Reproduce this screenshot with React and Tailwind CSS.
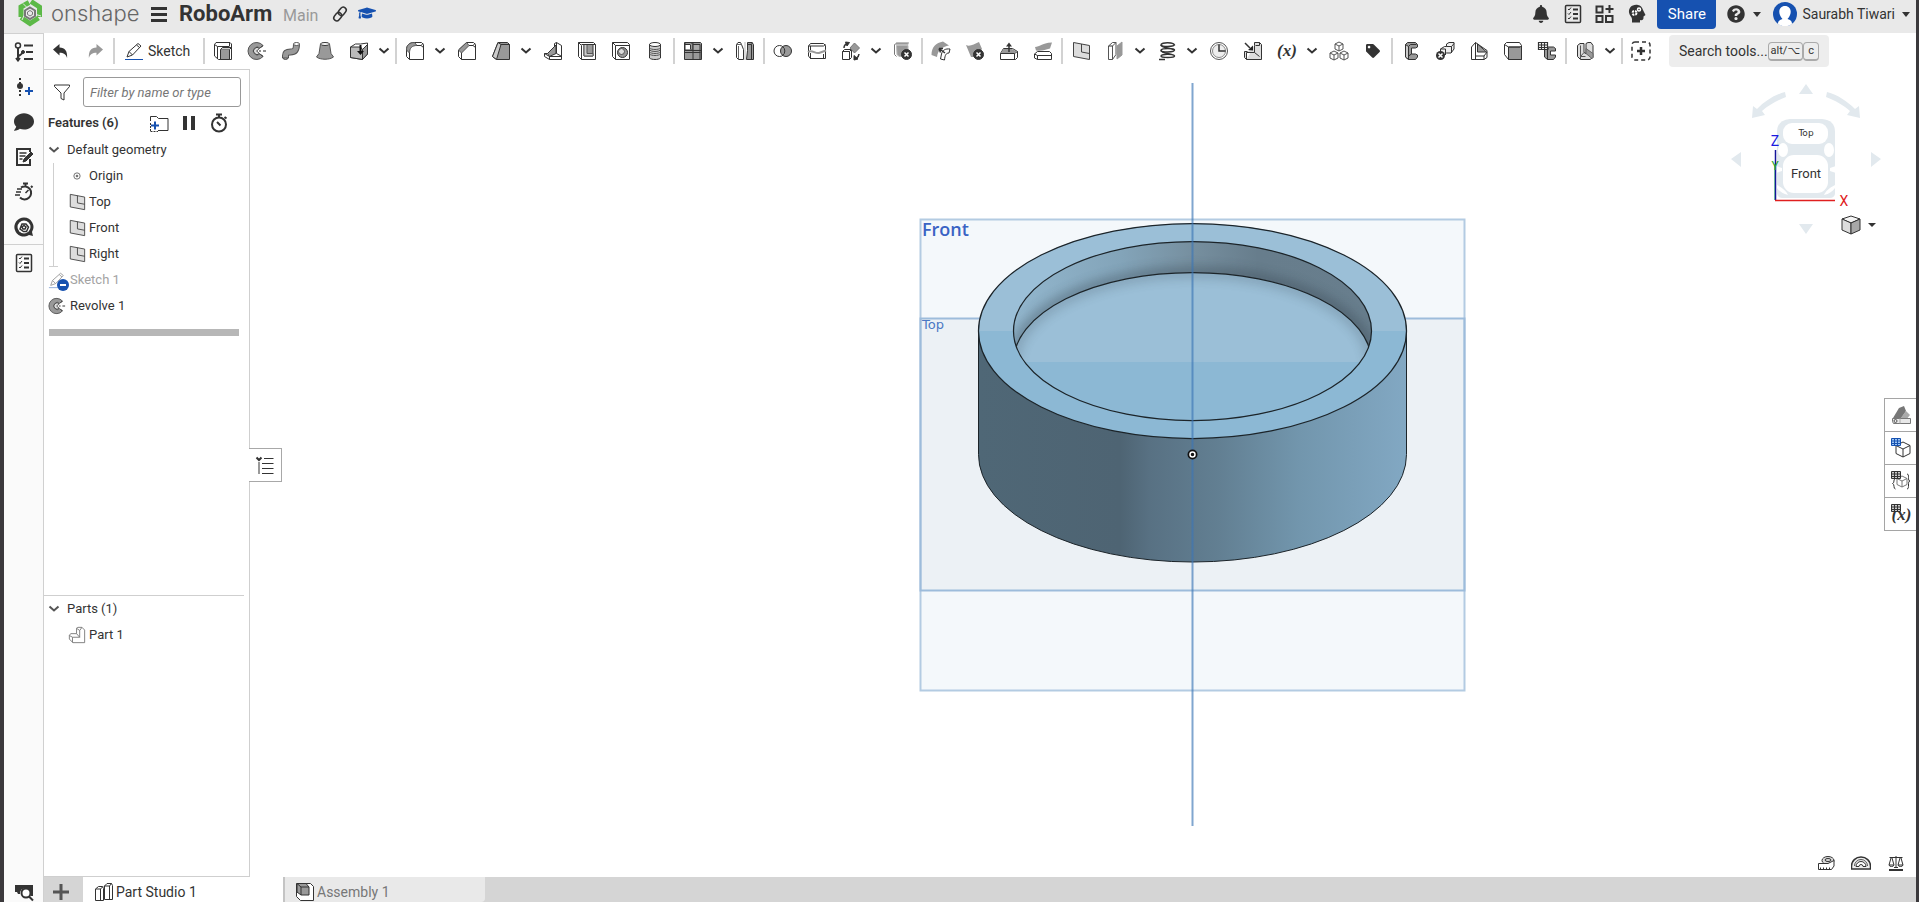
import React, { useState } from "react";
import { FaBell, FaComment, FaQuestionCircle, FaGraduationCap, FaTag } from "react-icons/fa";

const INK = "#333333";
const GREY = "#999999";
const BLUE = "#1651b0";

// 20x20 line icons used over the toolbar and the side panels
const icons = {
  undo: <path d="M2 8.5 8.5 3v3.6c5.5 0 8 3.6 7.6 10.4-1.2-3.700-3.400-5.200-7.600-5.200V14.500Z" fill={INK} stroke="none" />,
  redo: <path d="M18 8.500 11.500 3v3.600c-5.500 0-8 3.600-7.600 10.400 1.200-3.700 3.400-5.200 7.600-5.200V14.500Z" fill={GREY} stroke="none" />,
  sketch: (
    <>
      <path d="m3 16 2-5.500L14 2.500l3 2.500-8.500 9ZM5 10.500l3.500 3.500M12.500 4l3 2.500" />
      <path d="M1 18.500h18" stroke={BLUE} />
    </>
  ),
  extrude: (
    <>
      <path d="M1.500 3.500 3 1.500h14l1.500 1.500v15.500h-13l-4-3.500ZM1.500 3.500l3 2H16M4.500 5.500v12.500M16.500 1.500v4" strokeWidth="1" />
      <path d="M7.500 8.500h9v10h-9Z" fill={GREY} />
      <path d="m7.500 8.500 2-2h9l-2 2" fill="#ccc" />
    </>
  ),
  revolve: (
    <>
      <path d="M16 4.500A8.500 8.500 0 1 0 16 15.500L13 13a4 4 0 1 1 0-6Z" fill={GREY} stroke="#555" />
      <path d="M12.500 7.500a3.500 3.500 0 1 0 0 5l-2-1.500a1.200 1.200 0 0 1 0-2Z" fill="#ddd" stroke="#444" />
      <path d="M12 10h2m2 0h3M14 6.500l2-2M14 13.500l2 2" stroke="#222" />
    </>
  ),
  sweep: (
    <>
      <path d="M4.500 17v-2.500c0-3 2-3.500 5-3.500 4.500 0 6-2 6-8" stroke="#555" strokeWidth="7" />
      <path d="M4.500 16.500v-2c0-3 2-3.500 5-3.500 4.500 0 6-2 6-8" stroke={GREY} strokeWidth="5" />
      <ellipse cx="15.500" cy="3" rx="3" ry="1.500" fill="#fff" stroke="#555" />
      <path d="M1.500 17c1.500 1.800 4.500 1.800 6 0" fill={GREY} />
    </>
  ),
  loft: (
    <>
      <path d="M5.500 3 4 12.500 1.500 16c4 3 13 3 17 0L16 12.500 14.500 3Z" fill={GREY} stroke="#555" />
      <ellipse cx="10" cy="3" rx="4.500" ry="1.500" fill="#fff" />
    </>
  ),
  thicken: (
    <>
      <path d="m1.500 6 5-3h5L18.500 2v11l-5 5.500-12-2Z" fill="#fff" />
      <path d="M1.500 6h10l2 2.500v10l-12-2Z" fill="#bbb" />
      <path d="m13.500 8.500 5-5v9.500l-5 5.500Z" fill={GREY} />
      <path d="M11.500 4v7" stroke="#111" strokeWidth="2" />
      <path d="m8 10 3.500 4 3.500-4Z" fill="#111" stroke="none" />
    </>
  ),
  fillet: (
    <>
      <path d="M1.500 9c0-5 3-7.500 8-7.500h7l2 2v15h-14l-3-3Z" fill="#fff" />
      <path d="M1.500 9c0-5 3-7.500 8-7.500l2.500 3c-5 0-7.500 2.500-7.500 7.500Z" fill={GREY} stroke="#555" />
      <path d="M4.500 12v6.500M12 4.500h4l2-2M16 4.500l2.500 2" />
    </>
  ),
  chamfer: (
    <>
      <path d="m1.500 9 8-7.500h7l2 2v15h-14l-3-3Z" fill="#fff" />
      <path d="m1.500 9 8-7.500 2.500 3-7.500 7.500Z" fill={GREY} stroke="#555" />
      <path d="M4.500 12v6.500M12 4.500h4l2-2M16 4.500l2.500 2" />
    </>
  ),
  draft: (
    <>
      <path d="M1.500 15.500 7 1.500h9.500l2 2v15h-13Z" fill={GREY} />
      <path d="m1.500 15.500 4 3L10 3.500 7 1.500Z" fill="#ccc" />
      <path d="M10 3.500h8.500" />
    </>
  ),
  rib: (
    <>
      <path d="M1.500 12.500h3l7-7v-3l2-1 5 3v14H6.500l-5-3Z" fill="#fff" />
      <path d="m4.500 12.500 8.500-8.500v8.500l-6.500 3Z" fill={GREY} />
      <path d="M13.500 12.500 18 15M6.500 15.500h12M13.500 1.500v11M1.500 12.500l5 3v3" />
    </>
  ),
  shell: (
    <>
      <path d="M1.500 1.500h15l2 2v15h-14l-3-3ZM1.500 1.500l3 3M4.500 4.500v14" />
      <path d="M7 3.500h9v11.500H7Z" fill={GREY} />
      <path d="M7 3.500h3v9h6v2.500H7Z" fill="#ccc" stroke="#555" />
      <path d="M4.500 3.500h14" />
    </>
  ),
  hole: (
    <>
      <path d="M1.500 1.500h15l2 2v15h-14l-3-3ZM1.500 1.500l3 3h14M4.500 4.500v14" />
      <circle cx="11.500" cy="11.500" r="5" fill={GREY} />
      <circle cx="10.500" cy="10.500" r="3" fill="#ddd" stroke="#555" />
    </>
  ),
  thread: (
    <>
      <path d="M4.500 3v14c2 2 9 2 11 0V3" fill="#ccc" />
      <ellipse cx="10" cy="3.500" rx="5.500" ry="2" fill="#fff" />
      <path d="M4.500 7c2 2 9 2 11 0M4.500 9c2 2 9 2 11 0M4.500 11c2 2 9 2 11 0M4.500 13c2 2 9 2 11 0" stroke="#555" />
    </>
  ),
  pattern: (
    <>
      <path d="M1.500 1.500h16l1 1v16h-17Z" fill={GREY} />
      <path d="M2 2h7v7H2Z" fill="#fff" />
      <path d="M11 3.500h6v5h-6Z" fill="#aaa" stroke="none" />
      <path d="M1.500 9.500h17M10 1.500v17M1.500 3.500h6v5M10 3.500h7v15M1.500 11.500h16" />
    </>
  ),
  mirror: (
    <>
      <path d="M1.500 3.500v13l2 2h5v-10l-2-5-1-2H3Z" fill="#fff" />
      <path d="M1.500 3.500h5M3.500 5v13.500" stroke="#666" />
      <path d="M18.500 3.500 17 1.500h-4.500v8l-1 9h7Z" fill={GREY} />
      <path d="M12.500 3.500h4v15M16.500 3.500l1-2" />
      <path d="M10 1v18" stroke="#bbb" />
    </>
  ),
  boolean: (
    <>
      <circle cx="6.500" cy="10" r="5.500" />
      <circle cx="13" cy="10" r="5.500" fill={GREY} />
      <path d="M9.500 5.500a5.500 5.500 0 0 1 0 9" />
    </>
  ),
  split: (
    <>
      <path d="m1.500 5 2-2.500h13l2 2v13h-15l-2-2.500ZM1.500 5h15l2-1.500M3.500 5v4" />
      <path d="M1 11c4-3 7 2 11 1l7-2.500" stroke={GREY} strokeWidth="2" />
      <path d="M3.500 12v6M16.500 13v5" />
    </>
  ),
  transform: (
    <>
      <path d="m1.500 10.500 2-2h7v8l-2 2h-7ZM1.500 10.500h7l2-2M8.500 10.500v8" />
      <path d="m13.500 2 5 5-5 5-4.500-5Z" fill={GREY} stroke="#777" />
      <path d="M3 7c0-3 1-4 4-4.500M18 13c0 2-1 3-3 4.500" strokeWidth="1.500" />
      <path d="m4.500 1 4 .500-2.500 3.500ZM13 14.500v4.500l4-1Z" fill={INK} />
    </>
  ),
  deletePart: (
    <>
      <path d="m1.500 3.500 2-2h12l-.500 2ZM3.500 4.500h11.500v11h-9l-2-2Z" fill={GREY} stroke="#bbb" />
      <path d="M1.500 3.500v10l2 2" stroke="#777" />
      <circle cx="13.500" cy="13.500" r="5" fill={INK} />
      <path d="m11.500 11.500 4 4m0-4-4 4" stroke="#fff" strokeWidth="1.500" />
    </>
  ),
  modifyFillet: (
    <>
      <path d="M.500 14C.500 6 5 2 12 .500l6 4C12 6 7 8 6 16Z" fill={GREY} stroke="none" />
      <path d="m9.500 18 1-5c1-4 4-5.500 8.500-5l-1 4c-3 0-4 2-4.500 7Z" fill="#fff" />
      <path d="m14 12-6-4.500m0 0 1.500 4M8 7.500h4" strokeWidth="1.500" />
    </>
  ),
  deleteFace: (
    <>
      <path d="M1 4c4 2 8-1 13-3l3 7-6 8H6Z" fill={GREY} stroke="none" />
      <circle cx="13.500" cy="13.500" r="5" fill={INK} />
      <path d="m11.500 11.500 4 4m0-4-4 4" stroke="#fff" strokeWidth="1.500" />
    </>
  ),
  moveFace: (
    <>
      <path d="m1.500 12.500 3-5h9l5 3v6l-2 2h-15ZM1.500 12.500h14l3-2M15.500 12.500v6" fill="#fff" />
      <path d="m4.500 8-2.500 4h13.500l2.500-1.500-5-2.500Z" fill={GREY} stroke="none" />
      <path d="M10 11V4" strokeWidth="1.500" />
      <path d="m7 5.500 3-4 3 4Z" fill={INK} stroke="none" />
    </>
  ),
  replaceFace: (
    <>
      <path d="M2 6c5 0 6-4 17-4.500l-2 6c-5 1-8 3-14 2Z" fill={GREY} stroke="none" />
      <path d="m1.500 13 3-2.500h12l2 2v6h-14l-3-1.500ZM1.500 13l3 1.500h14M4.500 14.500v4" />
    </>
  ),
  plane: (
    <>
      <path d="m2.500 1.500 16 3v14l-16-3Z" fill="#ddd" stroke="#444" />
      <path d="M10.500 3v8l8 1.500" stroke="#444" />
    </>
  ),
  frame: (
    <>
      <path d="m3.500 5 4-3.500h3.500v12L7.500 18.500h-4ZM7.500 18.500V5l3.500-3.500" stroke="#555" />
      <path d="m12 5 5-4v13l-5 4Z" fill={GREY} stroke="#999" />
      <path d="M3.500 5h4" />
    </>
  ),
  helix: (
    <>
      <path d="M17.500 4.500c0-3.500-13.500-3.500-13.500-.500 0 2 13.500 2 13.500-.500" strokeWidth="1.500" />
      <path d="M4 4c0 3 13.500 3.500 13.500 5.500M17.500 9c0-2-13.500-2.500-13.500.500 0 2 13.500 2 13.500-.500" strokeWidth="1.500" />
      <path d="M4 9.500c0 3 13.500 3.500 13.500 5.500 0-2-13.500-2.500-13.500 0 0 2 13.500 2 13.500 0M2 18.500h6" strokeWidth="1.500" />
    </>
  ),
  curve: (
    <>
      <circle cx="10" cy="10" r="8.500" stroke="#555" />
      <circle cx="10" cy="10" r="6.500" fill="#eee" stroke="#888" />
      <path d="M10 3.500V10h6.500" strokeWidth="1.500" />
    </>
  ),
  derive: (
    <>
      <path d="M11.500 4.500V1.500h5l2 2v15h-15l-2-2v-6h3M16.500 1.500v3h-4M11.500 4.500v7h-8v7M11.500 11.500l5 4" fill="#ddd" />
      <path d="m2 2 5 5" strokeWidth="1.500" />
      <path d="M10 9.500V4.500L5 9Z" fill="#222" stroke="none" />
    </>
  ),
  variable: (
    <text x="10" y="15" textAnchor="middle" fontFamily="Liberation Serif, serif" fontWeight="bold" fontStyle="italic" fontSize="17" fill={INK} stroke="none">(x)</text>
  ),
  mates: (
    <g stroke="#555">
      <path d="m10 1 4 2v5l-4 2-4-2V3ZM6 3l4 2 4-2M10 5v5M5 10l4 2v5l-4 2-4-2v-5ZM1 12l4 2 4-2M5 14v5M15 10l4 2v5l-4 2-4-2v-5ZM11 12l4 2 4-2M15 14v5" />
    </g>
  ),
  flange: (
    <>
      <path d="m4.500 3.500 2-2h8l2 2v2.500l-2 1h-4v6h4l2 1v2l-2 2.500h-7l-3-2.500Z" fill={GREY} />
      <path d="m4.500 3.500 3 2V18.500l-3-2.500Z" fill="#ccc" />
      <path d="m7.500 5.500 2-2h6M10.500 13l-3 2" />
    </>
  ),
  unfold: (
    <>
      <path d="m5.500 8 4-2.500h2V3L14 1.500h5V8l-3 4h-4.500l-3 2.500h-3ZM5.500 8h5V14M11.500 5.500h5l2.500-3M16.500 5.500V12" fill="#eee" />
      <circle cx="5.500" cy="14.500" r="4.500" fill={INK} stroke="none" />
      <path d="m3.500 12.500 4 4m0-4-4 4" stroke="#fff" strokeWidth="1.500" />
    </>
  ),
  corner: (
    <>
      <path d="M2.500 18.500V6l4-4.500L18 9.500v7l-3 2ZM6.500 1.500v17" fill="#fff" />
      <path d="m8.500 3 9 8h-9Z" fill={GREY} />
      <path d="M6.500 15h8.500l3-4M15 15v3.500" />
    </>
  ),
  bend: (
    <>
      <path d="m1.500 3.500 2-2h13l2 3v14h-13l-4-5Z" fill="#fff" />
      <path d="M5.500 6h11.500l1.500-1v13.500h-13Z" fill={GREY} />
      <path d="m1.500 3.500 4 2.500v12M5.500 6H17" />
    </>
  ),
  sheetTable: (
    <>
      <path d="M7.500 6h9l2 1.500V10h-5v4h5v2l-2 2.500h-6l-3-2.500Z" fill={GREY} />
      <path d="M10.500 18.500v-10l1.500-1" />
      <path d="M1.500 1.500h9v7h-9ZM1.500 4h9M1.500 6.500h9M4.500 1.500v7M7.500 1.500v7" fill="#fff" strokeWidth="1.200" />
    </>
  ),
  bracket: (
    <>
      <path d="M2.500 4.500 5 2.500h4v9l2 1V2.500l2-1h3l2 3v12l-3 2H5.500l-3-3Z" fill="#ddd" />
      <path d="M5.500 4.500v11h5M9 11.500l-3.500 4v3" stroke="#555" />
      <path d="m11 12.500 6 5 1-1v-4l-7-5Z" fill={GREY} stroke="#666" />
    </>
  ),
  addCustom: (
    <>
      <rect x="1" y="1" width="18" height="18" rx="3" strokeDasharray="4 3" strokeWidth="1.500" />
      <path d="M10 6v8M6 10h8" strokeWidth="2.500" />
    </>
  ),
  featureTree: (
    <>
      <circle cx="4" cy="3.500" r="2.500" strokeWidth="1.500" />
      <path d="M4 6v12m0-3c1-3 4-1 4.500-5M2 16l2 2.500L6 16M10 3.500h9M12 10h7M10 17h9" strokeWidth="2" />
      <circle cx="9" cy="10" r="1.500" fill={INK} />
    </>
  ),
  insertPoint: (
    <>
      <path d="M6 1v18" strokeDasharray="2 2" strokeWidth="2" />
      <circle cx="6" cy="9" r="3" fill={INK} stroke="none" />
      <path d="M15 10v8M11 14h8" stroke={BLUE} strokeWidth="2" />
    </>
  ),
  notes: (
    <>
      <path d="M16 12v6H3V2h13v3" strokeWidth="2" />
      <path d="M5.500 6h7M5.500 9h6M5.500 12h3" strokeWidth="1.500" />
      <path d="m9 15 1-3 7-7 2 2-7 7Z" fill={INK} strokeWidth="1" />
    </>
  ),
  history: (
    <>
      <path d="M7 5.500a6.500 6.500 0 1 1-1 10M11.500 1.500v3M9 1.500h5M17 4l1.500 1.500" strokeWidth="2" />
      <path d="m11.500 11 3-3M3 7h5M2 10h5M1 13h5" strokeWidth="1.500" />
    </>
  ),
  assistant: (
    <>
      <path d="M10 .5a9.500 9.500 0 1 0 5 17.500l4 1-1-4A9.500 9.500 0 0 0 10 .5Z" fill={INK} stroke="none" />
      <circle cx="10" cy="10" r="6.500" fill="#fff" stroke="none" />
      <path d="m6 12 2-5h4l2.500 3-2 4.500h-3ZM8 10l2-1.500 2 1.500-1 2H9Z" strokeWidth="1.500" />
    </>
  ),
  checklist: (
    <>
      <rect x="2.500" y="1.500" width="15" height="17" rx="1" strokeWidth="1.500" />
      <path d="m5 5 1 1 2-2.500M5 9.500l1 1L8 8M5 14l1 1 2-2.500" strokeWidth="1" />
      <path d="M10 5.500h5M10 10h5M10 14.500h5" strokeWidth="2" />
    </>
  ),
  searchView: (
    <>
      <path d="M1 3h18v11h-2.500a6 6 0 0 0-9-6.500A6 6 0 0 0 6 12H4l-1-2H1Z" fill={INK} stroke="none" />
      <circle cx="12" cy="11" r="4.500" fill="#fff" strokeWidth="2" />
      <path d="m15 14.500 4 4" strokeWidth="2" />
    </>
  ),
  appGrid: (
    <path d="M1.500 2.500h6v6h-6ZM1.500 12h6v6h-6ZM11 12h6.500v6H11ZM14.500 1v8M10.500 5h8" strokeWidth="2" />
  ),
  learning: (
    <>
      <path d="M11 1C5 0 1.500 4 2 8.500c.500 3 2.500 4 3 6.500v3.500h8V16c4 1 3.500-2 3.500-3.500l2-1.500-2.500-5C15 3 13.500 1.500 11 1Z" fill={INK} stroke="none" />
      <circle cx="7.500" cy="9" r="2" stroke="#fff" strokeWidth="2" strokeDasharray="2 1" />
      <circle cx="12" cy="5.500" r="1.500" stroke="#fff" strokeWidth="1.500" />
    </>
  ),
  link: (
    <g strokeWidth="1.500" transform="rotate(-50 10 10)">
      <rect x="2" y="7" width="9" height="6" rx="3" />
      <rect x="9" y="7" width="9" height="6" rx="3" />
    </g>
  ),
  filter: <path d="M2.500 3h15v1.500L12 11v7l-3-1.500V11L2.500 4.500Z" />,
  addFolder: (
    <>
      <path d="M1.500 8V3.500h6l2 2h9.500v12H9" />
      <path d="M1.500 10v9M1.500 18.500H9" strokeDasharray="2 1" />
      <path d="M6 8.500v8M2 12.500h8" stroke={BLUE} strokeWidth="2" />
    </>
  ),
  pause: <path d="M4 3h4v14H4ZM12 3h4v14h-4Z" fill={INK} stroke="none" />,
  stopwatch: (
    <>
      <circle cx="10" cy="11.500" r="7" strokeWidth="2" />
      <path d="M7 1.500h6M10 1.500v3M15.500 4l2 1.500M8 9l3.500 3.500" strokeWidth="2" />
    </>
  ),
  origin: (
    <>
      <circle cx="10" cy="10" r="3.500" stroke="#666" />
      <circle cx="10" cy="10" r="1" fill="#666" stroke="#666" />
    </>
  ),
  partThumb: (
    <path d="M1.500 10.500 3 8.500h6.500v-6L11 1.500h4.500l3 3V18.500H5.500l-4-4ZM1.500 10.500l3.500 2h8V5l-3.500-2.500M5 12.500v6M13 5l2.500-3.500M13 12.500l-3.500-4" stroke="#777" />
  ),
  partStudio: (
    <>
      <path d="m1.500 7 3-2.500h4l1 2v12h-8ZM1.500 7h5v11.500M6.500 7l2.500-2.500" />
      <path d="M10.500 4 13 1.500h4.500l1 2V17.500h-8ZM10.500 4h5v14M15.500 4l2-2.500" fill="#fff" />
    </>
  ),
  assembly: (
    <>
      <path d="m1.500 1.500 14 0 3 3v14h-13l-4-4Z" fill="#fff" />
      <path d="M2 1.500h9l3 3.500v8H6l-4-3Z" fill={GREY} />
      <path d="m2 1.500 4 3.500v8M6 5h8" />
    </>
  ),
  appearance: (
    <>
      <path d="m2 13 6-10 5-2 2 5-6 9Z" fill="#777" stroke="none" />
      <path d="m9 14 6-8 4 4-4 5Z" fill="#aaa" stroke="none" />
      <path d="M1.500 13.500h18v5h-17l-1-2Z" fill="#e8e8e8" stroke="#777" />
      <circle cx="4.500" cy="16" r="1.500" stroke="#555" />
      <path d="M9 13.500v5" stroke="#aaa" />
    </>
  ),
  cubeTable: (
    <>
      <path d="m12 4 7 3.500v8L12 19l-7-3.500v-8ZM5 7.500l7 3.500 7-3.500M12 11v8" />
      <path d="M.5.5h9v7h-9Z" fill="#9cc6f5" stroke={BLUE} />
      <path d="M.5 3h9M.5 5.500h9M3.500.500v7M6.500.500v7" stroke={BLUE} />
    </>
  ),
  configTable: (
    <>
      <path d="m11 5 5 2.500v6L11 16l-5-2.500v-6ZM6 7.500l5 2.500 5-2.500M11 10v6" stroke="#777" />
      <path d="M4 8c-2 0 0 4-2.500 4.500C4 13 2 18 4.500 18M16 3c3 0 0 7 3 7-3 0 0 8-3 8" />
      <path d="M.5.5h9v7h-9Z" fill="#ccc" />
      <path d="M.5 3h9M.5 5.500h9M3.500.500v7M6.500.500v7" />
    </>
  ),
  variableTable: (
    <>
      <text x="10.500" y="16" textAnchor="middle" fontFamily="Liberation Serif, serif" fontWeight="bold" fontStyle="italic" fontSize="17" fill={INK} stroke="none">(x)</text>
      <path d="M.5.5h9v7h-9Z" fill="#ccc" />
      <path d="M.5 3h9M.5 5.500h9M3.500.500v7M6.500.500v7" />
    </>
  ),
  listToggle: (
    <>
      <path d="m1.500 2.500 2.500 2.500 2.500-2.500" strokeWidth="2" />
      <path d="M4 7v12" stroke={GREY} strokeWidth="2" />
      <path d="M9 3.500h9.500M7 8.500h11.500M7 13.500h11.500M7 18.500h11.500" />
    </>
  ),
  tape: (
    <>
      <ellipse cx="12" cy="7.500" rx="6" ry="4" fill="#ddd" />
      <ellipse cx="12" cy="7" rx="3" ry="1.500" />
      <path d="M2.500 10.500H12l6-3V13l-2.500 3.500h-13Z" fill="#fff" />
      <path d="M4.500 16.500v-2m3 2v-2m3 2v-2m3 2v-2" />
    </>
  ),
  protractor: (
    <>
      <path d="M.500 16v-3a9.500 9 0 0 1 19 0v3Z" strokeWidth="1.500" fill="#eee" />
      <path d="M3.500 13a6.500 6.500 0 0 1 13 0" stroke="#555" />
      <path d="M5 13.500a5 5 0 0 1 10 0h-3a2 2 0 0 0-4 0Z" fill="#fff" />
    </>
  ),
  scales: (
    <>
      <path d="M3 17h14" strokeWidth="2" />
      <path d="M10 3v12M3.500 4.500h13" />
      <path d="M5 5 3 12h5L6 5M14 5l-2 7h5l-2-7M3 12c0 2 5 2 5 0M12 12c0 2 5 2 5 0M8 14.500h4" />
    </>
  ),
};

const Icon = ({ name, className = "size-5" }) => (
  <svg viewBox="0 0 20 20" className={`shrink-0 ${className}`} fill="none" stroke={INK} strokeWidth="1" aria-hidden="true">
    {icons[name]}
  </svg>
);

const Chevron = ({ color = INK }) => (
  <svg viewBox="0 0 12 8" className="h-2 w-3" fill="none" stroke={color} strokeWidth="2" aria-hidden="true">
    <path d="m1.500 1.500 4.500 4 4.500-4" />
  </svg>
);

const Caret = () => (
  <svg viewBox="0 0 8 5" className="h-[5px] w-2" aria-hidden="true">
    <path d="M0 0h8L4 5Z" fill={INK} />
  </svg>
);

// "|" is a divider and "v" a menu arrow, the rest are icon names
const tools = [
  "extrude", "revolve", "sweep", "loft", "thicken", "v", "|",
  "fillet", "v", "chamfer", "draft", "v", "rib", "shell", "hole", "thread", "|",
  "pattern", "v", "mirror", "|",
  "boolean", "split", "transform", "v", "deletePart", "|",
  "modifyFillet", "deleteFace", "moveFace", "replaceFace", "|",
  "plane", "frame", "v", "helix", "v", "curve", "derive", "variable", "v", "mates", "tag", "|",
  "flange", "unfold", "corner", "bend", "sheetTable", "|",
  "bracket", "v", "|",
  "addCustom",
];

const Divider = () => <div className="mx-px h-[26px] w-0.5 shrink-0 bg-[#d2d2d2]" />;

const ToolButton = ({ name }) => {
  if (name === "|") return <Divider />;
  if (name === "v") {
    return (
      <button aria-label="More tools" className="flex h-8 w-[18px] shrink-0 items-center justify-center pr-0.5">
        <Chevron />
      </button>
    );
  }
  return (
    <button aria-label={name} className="flex h-8 w-[34px] shrink-0 items-center justify-center">
      {name === "tag" ? <FaTag className="size-3.5 text-[#333]" /> : <Icon name={name} />}
    </button>
  );
};

const Logo = () => (
  <svg viewBox="0 0 24 28" className="h-7 w-6 shrink-0" fill="none" aria-hidden="true">
    <path d="M3 17V7L11 2.500" stroke="#5cb947" strokeWidth="5" />
    <path d="m13 1.500 8.500 5.500V17" stroke="#5cb947" strokeWidth="5" />
    <path d="m20.500 18-8.500 5.500-9-6" stroke="#5cb947" strokeWidth="5" />
    <path d="m5 3.500 4 4M23 16l-5-1.500M4 20l2-4.500" stroke="#e9e9e9" strokeWidth="1" />
    <path d="m12 7.500 5 3v5.500l-5 3-5-3v-5.500Z" stroke="#777" strokeWidth="2" />
    <path d="m12 10.500 2.500 1.500v2.500L12 16l-2.500-1.500V12Z" stroke="#777" />
  </svg>
);

const Header = () => (
  <header className="flex h-[33px] shrink-0 items-start bg-[#e9e9e9] pl-3.5 text-[#333]">
    <Logo />
    <span className="ml-[9px] w-[87px] font-[Inter] text-[22px] leading-[26px] font-light text-[#666]">onshape</span>
    <button aria-label="Menu" className="ml-[13px] flex h-7 w-4 flex-col justify-center gap-[3px]">
      <span className="h-[3px] w-4 bg-[#333]" />
      <span className="h-[3px] w-4 bg-[#333]" />
      <span className="h-[3px] w-4 bg-[#333]" />
    </button>
    <h1 className="ml-3 w-24 text-[22px] leading-7 font-bold">RoboArm</h1>
    <span className="ml-2 text-base leading-8 text-[#999]">Main</span>
    <button aria-label="Copy link" className="mt-1 ml-3">
      <Icon name="link" />
    </button>
    <FaGraduationCap className="mt-1 ml-2 size-[18px] text-[#1651b0]" />

    <div className="ml-auto flex h-7 items-center">
      <button aria-label="Notifications" className="w-8">
        <FaBell className="mx-auto size-[18px]" />
      </button>
      <button aria-label="Tasks" className="w-8">
        <Icon name="checklist" className="mx-auto size-5" />
      </button>
      <button aria-label="Apps" className="w-8">
        <Icon name="appGrid" className="mx-auto size-5" />
      </button>
      <button aria-label="Learning" className="w-8">
        <Icon name="learning" className="mx-auto size-5" />
      </button>
      <button className="ml-1 h-[29px] w-[59px] rounded-b bg-[#1651b0] text-[15px] leading-6 text-white">Share</button>
      <button aria-label="Help" className="ml-[11px] flex items-center gap-2">
        <FaQuestionCircle className="size-[18px]" />
        <Caret />
      </button>
      <button className="ml-3 flex items-center gap-[5px] pr-1.5 text-sm">
        <svg viewBox="0 0 24 24" className="size-6" aria-hidden="true">
          <circle cx="12" cy="12" r="12" fill={BLUE} />
          <path d="M5 22c0-3 1.500-4 4.500-5C4 11 6 4 12 4s8 7 2.500 13c3 1 4.500 2 4.500 5a12 12 0 0 1-14 0Z" fill="#fff" />
        </svg>
        Saurabh Tiwari
        <span className="ml-0.5">
          <Caret />
        </span>
      </button>
    </div>
  </header>
);

const Toolbar = () => (
  <div className="flex h-9 shrink-0 items-center bg-white text-sm text-[#333]">
    <ToolButton name="undo" />
    <ToolButton name="redo" />
    <Divider />
    <button className="flex h-8 w-[86px] shrink-0 items-center gap-1 pl-2">
      <Icon name="sketch" />
      Sketch
    </button>
    <Divider />
    {tools.map((name, i) => (
      <ToolButton key={i} name={name} />
    ))}
    <button className="ml-[11px] flex h-8 w-40 shrink-0 items-center rounded bg-[#ededed] pl-2.5 whitespace-nowrap">
      Search tools...
      <span className="ml-auto flex pr-2.5 text-[11px] leading-4">
        <kbd className="rounded-sm border border-b-2 border-[#aaa] px-0.5 font-[Roboto,'DejaVu_Sans',sans-serif]">alt/⌥</kbd>
        <kbd className="w-4 rounded-sm border border-b-2 border-[#aaa] text-center font-[Roboto]">c</kbd>
      </span>
    </button>
  </div>
);

const railTop = ["featureTree", "insertPoint", "comment", "notes", "history", "assistant"];

const RailButton = ({ name }) => (
  <button aria-label={name} className="flex h-[35px] w-full items-center justify-center">
    {name === "comment" ? <FaComment className="size-5 text-[#333]" /> : <Icon name={name} />}
  </button>
);

const Rail = () => (
  <nav className="flex w-10 shrink-0 flex-col border-t border-r border-[#d0d0d0] bg-[#fafafa]">
    {railTop.map((name) => (
      <RailButton key={name} name={name} />
    ))}
    <div className="h-px bg-[#d0d0d0]" />
    <RailButton name="checklist" />
    <div className="mt-auto h-5">
      <Icon name="searchView" className="mx-auto size-5" />
    </div>
  </nav>
);

const TreeRow = ({ icon, label }) => (
  <li className="flex h-[26px] items-center gap-[3px] pl-6">
    <Icon name={icon} className="size-[18px]" />
    {label}
  </li>
);

const FeaturePanel = () => {
  const [filter, setFilter] = useState("");

  return (
    <aside className="flex w-[206px] shrink-0 flex-col border border-l-0 border-[#cfcfcf] bg-white text-[13px] text-[#333]">
      <div className="mt-[7px] flex h-[30px] items-center pr-2 pl-2">
        <Icon name="filter" />
        <input
          aria-label="Filter by name or type"
          placeholder="Filter by name or type"
          value={filter}
          onChange={(e) => setFilter(e.target.value)}
          className="ml-[11px] h-[30px] min-w-0 flex-1 rounded-[3px] border border-[#999] px-1.5 italic placeholder:text-[#777]"
        />
      </div>
      <div className="flex h-[30px] items-center pt-0.5 pl-1">
        <h2 className="flex-1 font-semibold">Features (6)</h2>
        <div className="flex gap-2.5 pr-5">
          <button aria-label="Add folder"><Icon name="addFolder" /></button>
          <button aria-label="Suppress"><Icon name="pause" /></button>
          <button aria-label="Timing"><Icon name="stopwatch" /></button>
        </div>
      </div>
      <div className="flex h-[26px] items-center gap-[7px] pl-1">
        <Chevron color="#555" />
        Default geometry
      </div>
      <ul className="relative">
        <span className="absolute top-0 left-[9px] h-full w-px bg-[#cfcfcf]" />
        <span className="absolute bottom-0 left-[5px] h-px w-[9px] bg-[#cfcfcf]" />
        <TreeRow icon="origin" label="Origin" />
        <TreeRow icon="plane" label="Top" />
        <TreeRow icon="plane" label="Front" />
        <TreeRow icon="plane" label="Right" />
      </ul>
      <div className="relative flex h-[26px] items-center gap-1 pl-1 text-[#a3a3a3]">
        <Icon name="sketch" className="size-[18px] opacity-50" />
        <svg viewBox="0 0 12 12" className="absolute top-3 left-[13px] size-3" aria-hidden="true">
          <circle cx="6" cy="6" r="6" fill={BLUE} />
          <path d="M3 6h6" stroke="#fff" strokeWidth="2" />
        </svg>
        Sketch 1
      </div>
      <div className="flex h-[26px] items-center gap-1 pl-1">
        <Icon name="revolve" className="size-[18px]" />
        Revolve 1
      </div>
      <div className="mt-2.5 mr-2.5 ml-[5px] h-[7px] bg-[#b7b7b7]" />

      <section className="mt-auto mr-[5px] h-[281px] border-t border-[#cfcfcf]">
        <div className="flex h-[26px] items-center gap-[7px] pl-1">
          <Chevron color="#555" />
          Parts (1)
        </div>
        <ul>
          <TreeRow icon="partThumb" label="Part 1" />
        </ul>
      </section>
    </aside>
  );
};

const Model = () => (
  <svg viewBox="250 69 1666 808" className="absolute inset-0 h-full w-full" fill="none" role="img" aria-label="Ring part with its planes">
    <defs>
      <linearGradient id="side">
        <stop offset="0" stopColor="#4f6776" />
        <stop offset="0.33" stopColor="#4e6473" />
        <stop offset="0.4" stopColor="#587183" />
        <stop offset="0.56" stopColor="#627f92" />
        <stop offset="0.75" stopColor="#7296ad" />
        <stop offset="1" stopColor="#82a8c3" />
      </linearGradient>
      <linearGradient id="wall">
        <stop offset="0" stopColor="#92b6cd" />
        <stop offset="0.3" stopColor="#83a4b9" />
        <stop offset="0.5" stopColor="#768f9f" />
        <stop offset="0.68" stopColor="#677d8c" />
        <stop offset="1" stopColor="#687e8d" />
      </linearGradient>
      <filter id="soft" x="-10%" y="-10%" width="120%" height="120%">
        <feGaussianBlur stdDeviation="6" />
      </filter>
      <clipPath id="bore">
        <ellipse cx="1192.500" cy="331" rx="179" ry="89.500" />
      </clipPath>
      <clipPath id="floor">
        <ellipse cx="1192.500" cy="362" rx="179" ry="89.500" />
      </clipPath>
    </defs>

    {/* front and top planes */}
    <rect x="920.500" y="219.500" width="544" height="471" fill="#f4f8fb" />
    <rect x="920.500" y="318.500" width="544" height="272" fill="#ecf1f5" />
    <rect x="920.500" y="219.500" width="544" height="471" stroke="#b3cbe2" strokeWidth="2" />
    <rect x="920.500" y="318.500" width="544" height="272" stroke="#9dbcdb" strokeWidth="2" />
    <text x="922" y="236" fontFamily="Open Sans, sans-serif" fontWeight="600" fontSize="18" fill="#3a63c4">Front</text>
    <text x="922" y="329" fontFamily="DejaVu Sans, sans-serif" fontSize="13" fill="#4b78c4">Top</text>

    {/* body */}
    <path d="M978.500 331V454.500a214 107.500 0 0 0 428 0V331Z" fill="url(#side)" stroke="#1c2429" />
    <ellipse cx="1192.500" cy="331" rx="214" ry="107.500" fill="#8cb8d4" />
    <path d="M978.500 331a214 107.500 0 0 1 428 0Z" fill="#9bbfd7" />
    <ellipse cx="1192.500" cy="331" rx="214" ry="107.500" stroke="#1c2429" strokeWidth="1.250" />

    {/* bore */}
    <g clipPath="url(#bore)">
      <rect x="1013" y="241" width="360" height="180" fill="url(#wall)" />
      <ellipse cx="1192.500" cy="362" rx="179" ry="89.500" stroke="#33414b" strokeWidth="10" opacity="0.450" filter="url(#soft)" />
      <g clipPath="url(#floor)">
        <rect x="1013" y="270" width="360" height="92" fill="#9bbfd7" />
        <rect x="1013" y="362" width="360" height="60" fill="#8cb8d4" />
        <path d="M1013.500 362a179 89.500 0 0 1 358 0" stroke="#33414b" strokeWidth="8" opacity="0.300" filter="url(#soft)" />
      </g>
      <ellipse cx="1192.500" cy="362" rx="179" ry="89.500" stroke="#1c2429" strokeWidth="1.250" />
    </g>
    <ellipse cx="1192.500" cy="331" rx="179" ry="89.500" stroke="#1c2429" strokeWidth="1.250" />

    {/* revolve axis and origin */}
    <path d="M1192.500 83v743" stroke="#3c77b5" strokeWidth="2" opacity="0.650" />
    <circle cx="1192.500" cy="454.500" r="3.500" fill="#111" stroke="#111" strokeWidth="3" />
    <circle cx="1192.500" cy="454.500" r="2.500" fill="#111" stroke="#fff" strokeWidth="1.500" />
  </svg>
);

const ViewCube = () => (
  <svg viewBox="0 0 216 180" className="absolute top-px right-0 h-[180px] w-[216px]" fill="none" role="img" aria-label="View cube">
    <g fill="#e2e9ee">
      <path d="m106 14 7 10H99ZM106 164l7-10H99ZM31 89l10-7v15ZM181 89l-10-7v15Z" />
      <path d="m85 22 1 5c-10 4-17 8-24 14l3 4-13 3 1-12 4 3c8-8 17-14 28-17ZM127 22l-1 5c10 4 17 8 24 14l-3 4 13 3-1-12-4 3c-8-8-17-14-28-17Z" />
      <path d="M90 49h32q13 1 13 13v62q-1 4-5 4H82q-4 0-5-4V62q0-12 13-13Z" />
    </g>
    <g fill="#fff">
      <rect x="83" y="53" width="45" height="21" rx="9" />
      <rect x="83" y="85" width="45" height="38" rx="11" />
      <ellipse cx="83" cy="80" rx="5" ry="7" />
      <ellipse cx="129" cy="80" rx="5" ry="7" />
      <path d="m76 96 6 2v3l-6 2ZM136 96l-6 2v3l6 2ZM77 115c6 3 9 6 11 10-5-1-9-4-11-7ZM135 115c-6 3-9 6-11 10 5-1 9-4 11-7Z" />
    </g>
    <path d="M75.500 80v50" stroke="#15159a" strokeWidth="1.500" />
    <path d="M74.500 94v36" stroke="#6fb0a0" />
    <path d="M75 130.500h60" stroke="#e02020" strokeWidth="1.500" />
    <g fontFamily="Roboto, sans-serif" textAnchor="middle">
      <text x="106" y="66" fontFamily="DejaVu Sans, sans-serif" fontSize="9" fontWeight="500" fill="#333">Top</text>
      <text x="106" y="108" fontSize="13" fill="#333">Front</text>
      <text x="75" y="76" fontSize="14" fill="#1a1ae0">Z</text>
      <text x="75" y="100" fontSize="12" fill="#2ba52b">Y</text>
      <text x="144" y="136" fontSize="14" fill="#e02020">X</text>
    </g>
    <g stroke="#333">
      <path d="m142 149 9-3 9 3-9 4Z" fill="#f4f4f4" />
      <path d="m142 149 9 4v11l-9-4Z" fill="#dcdcdc" />
      <path d="m160 149-9 4v11l9-4Z" fill="#a8a8a8" />
    </g>
    <path d="M168 153h8l-4 4Z" fill={INK} />
  </svg>
);

const Viewport = () => (
  <main className="relative min-w-0 flex-1 bg-white">
    <Model />
    <ViewCube />
    <button aria-label="Toggle feature list" className="absolute top-[379px] -left-px flex h-[34px] w-[33px] items-center justify-center border border-l-0 border-[#a8a8a8] bg-white">
      <Icon name="listToggle" />
    </button>
    <div className="absolute top-[329px] right-0 flex w-8 flex-col border-t border-l border-[#a5a5a5] bg-white">
      {["appearance", "cubeTable", "configTable", "variableTable"].map((name) => (
        <button key={name} aria-label={name} className="flex h-[33px] items-center justify-center border-b border-[#a5a5a5]">
          <Icon name={name} />
        </button>
      ))}
    </div>
    <div className="absolute right-2.5 bottom-1 flex gap-[15px]">
      <button aria-label="Measure"><Icon name="tape" /></button>
      <button aria-label="Angle"><Icon name="protractor" /></button>
      <button aria-label="Mass properties"><Icon name="scales" /></button>
    </div>
  </main>
);

const TabBar = () => (
  <footer className="flex h-[25px] shrink-0 bg-[#d5d5d5] text-sm text-[#333]">
    <button aria-label="Insert tab" className="flex w-[39px] items-center justify-center pt-1 pr-1.5">
      <svg viewBox="0 0 16 16" className="size-4" stroke="#555" strokeWidth="3" aria-hidden="true">
        <path d="M8 0v16M0 8h16" />
      </svg>
    </button>
    <button className="flex w-[200px] items-center gap-0.5 bg-white pt-1 pl-[11px]">
      <Icon name="partStudio" />
      Part Studio 1
    </button>
    <button className="flex w-[202px] items-center gap-0.5 rounded-br border-l-2 border-[#c4c4c4] bg-[#e9e9e9] pt-1 pl-2.5 text-[#777]">
      <Icon name="assembly" />
      Assembly 1
    </button>
  </footer>
);

const App = () => (
  <div className="flex h-screen flex-col overflow-hidden border-r-[3px] border-l-4 border-[#3b393c] bg-white font-[Roboto,'Open_Sans',sans-serif]">
    <Header />
    <div className="flex min-h-0 flex-1">
      <Rail />
      <div className="flex min-w-0 flex-1 flex-col">
        <Toolbar />
        <div className="flex min-h-0 flex-1">
          <FeaturePanel />
          <Viewport />
        </div>
        <TabBar />
      </div>
    </div>
  </div>
);

export default App;
